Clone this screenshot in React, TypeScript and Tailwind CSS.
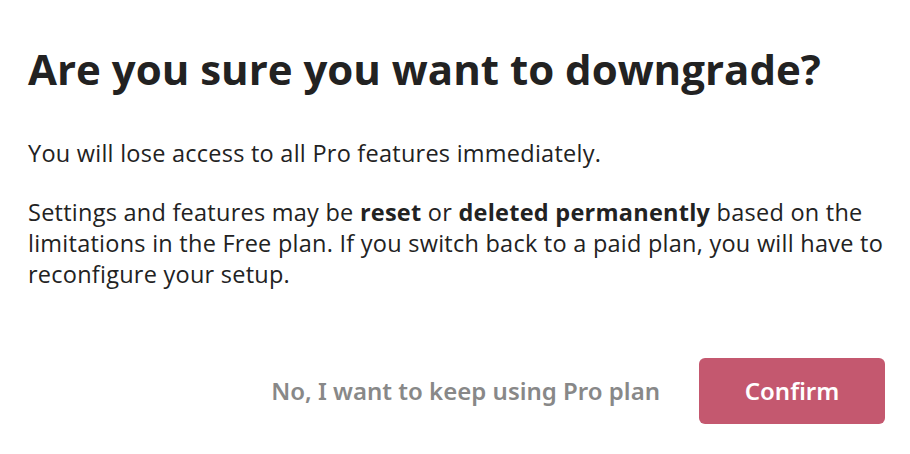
export default function App() {
  return (
    <div className="w-[910px] h-[454px] bg-white text-[#222222] font-['Open_Sans','Noto_Sans',sans-serif]">
      <div className="pl-7 pr-[25px] pt-[44px]">
        <h1 className="text-[42px] leading-[50px] font-bold">
          Are you sure you want to downgrade?
        </h1>
        <div className="mt-[44px] text-[23.5px] leading-[31px] tracking-[0.25px]">
          <p>You will lose access to all Pro features immediately.</p>
          <p className="mt-[28px]">
            Settings and features may be <strong>reset</strong> or <strong>deleted permanently</strong> based on the
            limitations in the Free plan. If you switch back to a paid plan, you will have to reconfigure your setup.
          </p>
        </div>
        <div className="mt-[68px] flex items-center justify-end gap-[39px] font-['Noto_Sans',sans-serif]">
          <button className="text-[24px] font-semibold text-[#888888]">No, I want to keep using Pro plan</button>
          <button className="w-[186px] h-[66px] rounded-[6px] bg-[#c4586f] text-white text-[24px] font-semibold">
            Confirm
          </button>
        </div>
      </div>
    </div>
  );
}
